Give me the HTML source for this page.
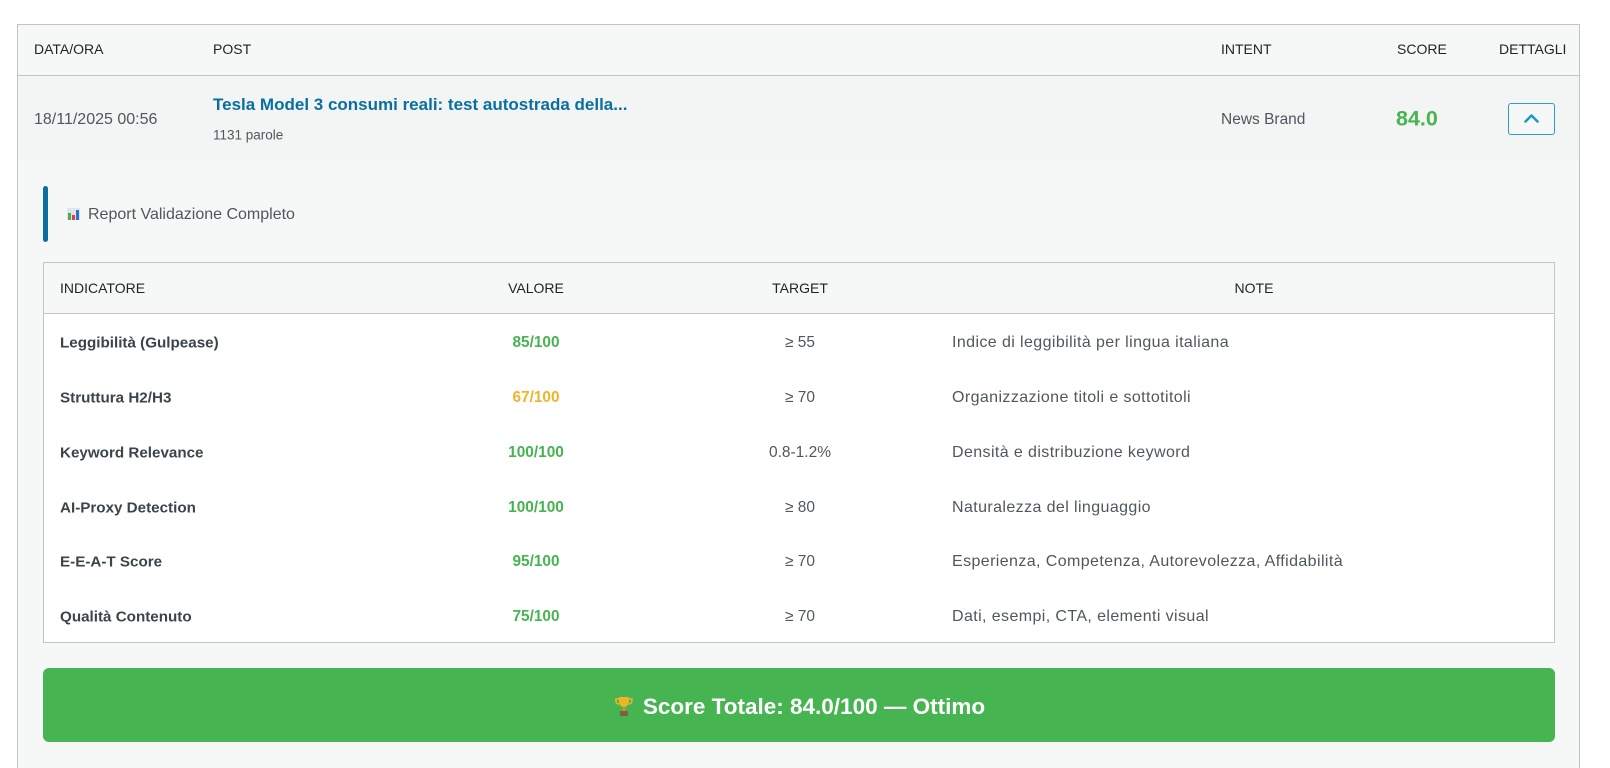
<!DOCTYPE html>
<html style="height:768px;overflow:hidden"><head><meta charset="utf-8"><style>
*{box-sizing:border-box;margin:0;padding:0}
html{width:1610px;height:768px;overflow:hidden}
body{width:1610px;height:768px;background:#fff;font-family:"Liberation Sans",sans-serif;color:#3c434a;position:relative;overflow:hidden}
.abs{position:absolute;white-space:nowrap}
.outer{position:absolute;left:17px;top:24px;width:1563px;height:760px;border:1px solid #c3c4c7;background:#f6f7f7}
.hdr{position:absolute;left:0;top:0;right:0;height:51px;background:#f6f7f7;border-bottom:1px solid #c3c4c7}
.row{position:absolute;left:0;top:51px;right:0;height:84px;background:#f3f4f4}
.th{font-size:14px;color:#1d2327;transform:translateY(-50%)}
.mid{transform:translateY(-50%)}
.ctr{transform:translate(-50%,-50%)}
.inner{position:absolute;left:43px;top:262px;width:1512px;height:381px;border:1px solid #c3c4c7;background:#fff}
.ihdr{position:absolute;left:0;top:0;right:0;height:51px;background:#f6f7f7;border-bottom:1px solid #c3c4c7}
.b{font-weight:bold;font-size:15.2px}
.g{color:#46b450;font-weight:bold;font-size:15.4px}
.o{color:#f0b429;font-weight:bold;font-size:15.4px}
.n{font-size:15.5px;color:#50575e}
.nt{font-size:16px;letter-spacing:0.4px;color:#50575e}
</style></head><body>
<div class="outer">
<div class="hdr"></div>
<div class="row"></div>
</div>
<div class="abs th" style="left:34px;top:49px">DATA/ORA</div>
<div class="abs th" style="left:213px;top:49px">POST</div>
<div class="abs th" style="left:1221px;top:49px">INTENT</div>
<div class="abs th" style="left:1397px;top:49px">SCORE</div>
<div class="abs th" style="left:1499px;top:49px">DETTAGLI</div>

<div class="abs mid" style="left:34px;top:120px;font-size:16px;color:#50575e">18/11/2025 00:56</div>
<div class="abs mid" style="left:213px;top:105px;font-size:17px;color:#0a6fa0;font-weight:bold">Tesla Model 3 consumi reali: test autostrada della...</div>
<div class="abs mid" style="left:213px;top:135px;font-size:13.5px;color:#50575e">1131 parole</div>
<div class="abs mid" style="left:1221px;top:120px;font-size:15.5px;color:#50575e">News Brand</div>
<div class="abs mid" style="left:1396px;top:119px;font-size:21.5px;color:#46b450;font-weight:bold">84.0</div>
<div class="abs" style="left:1508px;top:103px;width:47px;height:32px;border:1px solid #2a9fbf;border-radius:3px;background:#f6f7f7">
<svg width="47" height="32" style="position:absolute;left:-1px;top:-1px"><path d="M17.5 18.5 L23.5 12.5 L29.5 18.5" stroke="#1a9cc0" stroke-width="2.6" fill="none" stroke-linecap="round" stroke-linejoin="round"/></svg></div>

<div class="abs" style="left:43px;top:186px;width:5px;height:56px;background:#0a6fa0;border-radius:3px"></div>
<div class="abs mid" style="left:66px;top:215px;font-size:16px;color:#50575e"><svg width="15" height="15" style="vertical-align:-2px;margin-right:7px"><rect x="1" y="2" width="13" height="12" fill="#dfe4ea"/><rect x="2" y="7" width="3" height="7" fill="#4caf50"/><rect x="6" y="9" width="3" height="5" fill="#e53950"/><rect x="10" y="4" width="3" height="10" fill="#2f6fd8"/></svg>Report Validazione Completo</div>

<div class="inner"><div class="ihdr"></div></div>
<div class="abs th" style="left:60px;top:288px">INDICATORE</div>
<div class="abs th" style="left:536px;top:288px;transform:translate(-50%,-50%)">VALORE</div>
<div class="abs th" style="left:800px;top:288px;transform:translate(-50%,-50%)">TARGET</div>
<div class="abs th" style="left:1254px;top:288px;transform:translate(-50%,-50%)">NOTE</div>

<div class="abs mid b" style="left:60px;top:343px">Leggibilità (Gulpease)</div>
<div class="abs ctr g" style="left:536px;top:343px">85/100</div>
<div class="abs ctr n" style="left:800px;top:343px">≥ 55</div>
<div class="abs mid nt" style="left:952px;top:343px">Indice di leggibilità per lingua italiana</div>

<div class="abs mid b" style="left:60px;top:398px">Struttura H2/H3</div>
<div class="abs ctr o" style="left:536px;top:398px">67/100</div>
<div class="abs ctr n" style="left:800px;top:398px">≥ 70</div>
<div class="abs mid nt" style="left:952px;top:398px">Organizzazione titoli e sottotitoli</div>

<div class="abs mid b" style="left:60px;top:453px">Keyword Relevance</div>
<div class="abs ctr g" style="left:536px;top:453px">100/100</div>
<div class="abs ctr n" style="left:800px;top:453px">0.8-1.2%</div>
<div class="abs mid nt" style="left:952px;top:453px">Densità e distribuzione keyword</div>

<div class="abs mid b" style="left:60px;top:508px">AI-Proxy Detection</div>
<div class="abs ctr g" style="left:536px;top:508px">100/100</div>
<div class="abs ctr n" style="left:800px;top:508px">≥ 80</div>
<div class="abs mid nt" style="left:952px;top:508px">Naturalezza del linguaggio</div>

<div class="abs mid b" style="left:60px;top:562px">E-E-A-T Score</div>
<div class="abs ctr g" style="left:536px;top:562px">95/100</div>
<div class="abs ctr n" style="left:800px;top:562px">≥ 70</div>
<div class="abs mid nt" style="left:952px;top:562px">Esperienza, Competenza, Autorevolezza, Affidabilità</div>

<div class="abs mid b" style="left:60px;top:617px">Qualità Contenuto</div>
<div class="abs ctr g" style="left:536px;top:617px">75/100</div>
<div class="abs ctr n" style="left:800px;top:617px">≥ 70</div>
<div class="abs mid nt" style="left:952px;top:617px">Dati, esempi, CTA, elementi visual</div>

<div class="abs" style="left:43px;top:668px;width:1512px;height:74px;background:#46b450;border-radius:6px"></div>
<div class="abs" style="left:800px;top:707px;transform:translate(-50%,-50%);color:#fff;font-weight:bold;font-size:22.5px"><svg width="18" height="22" style="vertical-align:-3px;margin-right:10px"><path d="M4 2h10v5a5 5 0 0 1-10 0z" fill="#f0b429"/><path d="M4 4H1v2a3 3 0 0 0 3 3M14 4h3v2a3 3 0 0 1-3 3" stroke="#f0b429" stroke-width="1.5" fill="none"/><rect x="8" y="12" width="2" height="4" fill="#d99a1c"/><rect x="5" y="16" width="8" height="5" fill="#8a5a44"/></svg>Score Totale: 84.0/100 — Ottimo</div>
</body></html>
